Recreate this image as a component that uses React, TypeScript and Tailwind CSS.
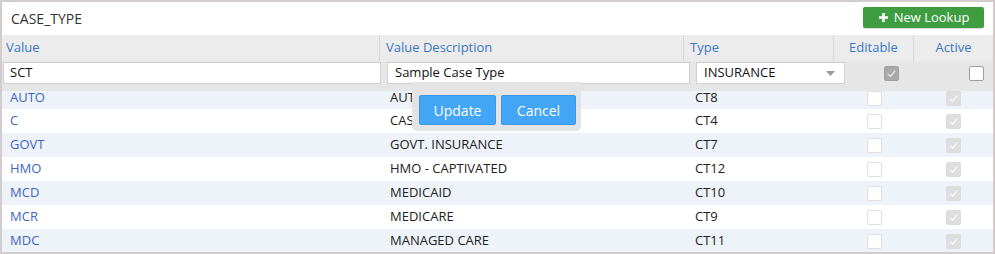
import React from "react";

type Row = { value: string; desc: string; type: string };

const rows: Row[] = [
  { value: "C", desc: "CASE", type: "CT4" },
  { value: "GOVT", desc: "GOVT. INSURANCE", type: "CT7" },
  { value: "HMO", desc: "HMO - CAPTIVATED", type: "CT12" },
  { value: "MCD", desc: "MEDICAID", type: "CT10" },
  { value: "MCR", desc: "MEDICARE", type: "CT9" },
  { value: "MDC", desc: "MANAGED CARE", type: "CT11" },
];

const cols = "grid grid-cols-[378px_304px_150px_80px_79px]";

function Check({ checked, tone }: { checked: boolean; tone: "light" | "dark" | "outline" }) {
  const box =
    tone === "dark"
      ? "bg-[#a9a9a9] border-[#a0a0a0]"
      : tone === "outline"
        ? "bg-white border-[#9e9e9e]"
        : checked
          ? "bg-[#dedede] border-[#dcdcdc]"
          : "bg-white border-[#e0e0e0]";
  return (
    <div className={`w-[15px] h-[15px] border rounded-[2px] flex items-center justify-center ${box}`}>
      {checked && (
        <svg width="11" height="11" viewBox="0 0 12 12">
          <path d="M2 6.5 L5 9 L10 3" fill="none" stroke={tone === "dark" ? "#e6e6e6" : "#f7f7f7"} strokeWidth="1.4" />
        </svg>
      )}
    </div>
  );
}

function DataRow({ row, striped, className = "" }: { row: Row; striped: boolean; className?: string }) {
  return (
    <div className={`${cols} h-[24px] items-center ${striped ? "bg-[#eef2f9]" : "bg-white"} ${className}`}>
      <div className="pl-[8px] text-[#3d66c2]">{row.value}</div>
      <div className="pl-[10px] text-[#222]">{row.desc}</div>
      <div className="pl-[11px] text-[#222]">{row.type}</div>
      <div className="flex justify-center">
        <Check checked={false} tone="light" />
      </div>
      <div className="flex justify-center">
        <Check checked tone="light" />
      </div>
    </div>
  );
}

export default function App() {
  return (
    <div
      className="relative w-[995px] h-[254px] border-2 border-[#d3cccd] bg-white overflow-hidden text-[13px]"
      style={{ fontFamily: "'Open Sans', 'Liberation Sans', sans-serif" }}
    >
      {/* title bar */}
      <div className="h-[33px] flex items-center justify-between pl-[9px] pr-[9px]">
        <span className="text-[14px] text-[#333]">CASE_TYPE</span>
        <button className="h-[21px] w-[121px] -mt-[2px] rounded-[2px] bg-[#3e9d40] text-white text-[13px] flex items-center justify-center gap-[5px] shadow-[0_1px_1px_rgba(0,0,0,0.15)]">
          <svg width="11" height="11" viewBox="0 0 11 11">
            <path d="M5.5 1 V10 M1 5.5 H10" stroke="white" strokeWidth="2.6" />
          </svg>
          New Lookup
        </button>
      </div>

      {/* header */}
      <div className={`${cols} h-[26px] items-center bg-[#ececec] text-[#3a78c6]`}>
        <div className="pl-[4px] h-full flex items-center border-r border-[#d6d6d6]">Value</div>
        <div className="pl-[6px] h-full flex items-center border-r border-[#d6d6d6]">Value Description</div>
        <div className="pl-[6px] h-full flex items-center border-r border-[#d6d6d6]">Type</div>
        <div className="h-full flex items-center justify-center border-r border-[#d6d6d6]">Editable</div>
        <div className="h-full flex items-center justify-center">Active</div>
      </div>

      {/* filter row */}
      <div className="h-[30px] bg-[#e6e6e6] flex items-start pt-[1px] pl-[1px] text-[#111]">
        <div className="w-[378px] h-[22px] bg-white border border-[#d0d0d0] flex items-center pl-[6px]">SCT</div>
        <div className="ml-[6px] w-[303px] h-[22px] bg-white border border-[#d0d0d0] flex items-center pl-[7px]">
          Sample Case Type
        </div>
        <div className="ml-[6px] w-[149px] h-[22px] bg-white border border-[#d0d0d0] flex items-center justify-between pl-[7px] pr-[9px]">
          <span>INSURANCE</span>
          <svg width="9" height="5" viewBox="0 0 9 5">
            <path d="M0 0 H9 L4.5 5 Z" fill="#9a9a9a" />
          </svg>
        </div>
        <div className="ml-[39px] mt-[4px]">
          <Check checked tone="dark" />
        </div>
        <div className="ml-[70px] mt-[4px]">
          <Check checked={false} tone="outline" />
        </div>
      </div>

      {/* first row, partly scrolled under the filter row */}
      <div className="h-[18px] overflow-hidden">
        <DataRow row={{ value: "AUTO", desc: "AUTO", type: "CT8" }} striped className="-mt-[5px]" />
      </div>
      {rows.map((r, i) => (
        <DataRow key={r.value} row={r} striped={i % 2 === 1} />
      ))}

      {/* inline edit actions */}
      <div className="absolute left-[410px] top-[80px] w-[169px] h-[49px] bg-[#e4e4e4] rounded-b-[5px] flex items-start gap-[5px] pl-[7px] pt-[13px]">
        <button className="w-[77px] h-[30px] rounded-[2px] bg-[#42a5f5] border border-[#3d97e2] text-white text-[14px]">
          Update
        </button>
        <button className="w-[75px] h-[30px] rounded-[2px] bg-[#42a5f5] border border-[#3d97e2] text-white text-[14px]">
          Cancel
        </button>
      </div>
    </div>
  );
}
